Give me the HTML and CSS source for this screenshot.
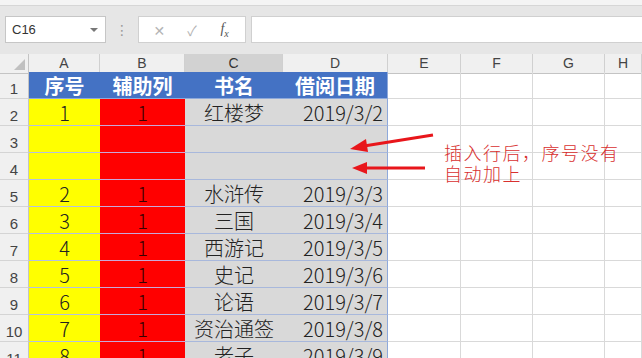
FILE: index.html
```html
<!DOCTYPE html>
<html lang="zh">
<head>
  <meta charset="UTF-8">
  <title>插入行后序号</title>
  <link rel="stylesheet" href="styles.css">
</head>
<body>

  <div class="ribbon-edge"></div>

  <div class="formula-bar">
    <div class="name-box">C16<span class="caret"></span></div>
    <div class="grip">⋮</div>
    <div class="fx-buttons">
      <span class="btn">✕</span>
      <span class="btn">✓</span>
      <span class="btn fx"><i>f</i><sub><i>x</i></sub></span>
    </div>
    <div class="formula-input"></div>
  </div>

  <div class="sheet">
    <div class="row col-head">
      <div class="corner"><span class="tri"></span></div>
      <div class="ch">A</div>
      <div class="ch">B</div>
      <div class="ch sel">C</div>
      <div class="ch">D</div>
      <div class="ch">E</div>
      <div class="ch">F</div>
      <div class="ch">G</div>
      <div class="ch">H</div>
    </div>

    <div class="row">
      <div class="rh">1</div>
      <div class="cell head">序号</div>
      <div class="cell head">辅助列</div>
      <div class="cell head">书名</div>
      <div class="cell head last">借阅日期</div>
      <div class="cell"></div><div class="cell"></div><div class="cell"></div><div class="cell"></div>
    </div>

    <div class="row">
      <div class="rh">2</div>
      <div class="cell yel">1</div>
      <div class="cell red">1</div>
      <div class="cell gray">红楼梦</div>
      <div class="cell gray date">2019/3/2</div>
      <div class="cell"></div><div class="cell"></div><div class="cell"></div><div class="cell"></div>
    </div>

    <div class="row">
      <div class="rh">3</div>
      <div class="cell yel"></div>
      <div class="cell red"></div>
      <div class="cell gray"></div>
      <div class="cell gray date"></div>
      <div class="cell"></div><div class="cell"></div><div class="cell"></div><div class="cell"></div>
    </div>

    <div class="row">
      <div class="rh">4</div>
      <div class="cell yel"></div>
      <div class="cell red"></div>
      <div class="cell gray"></div>
      <div class="cell gray date"></div>
      <div class="cell"></div><div class="cell"></div><div class="cell"></div><div class="cell"></div>
    </div>

    <div class="row">
      <div class="rh">5</div>
      <div class="cell yel">2</div>
      <div class="cell red">1</div>
      <div class="cell gray">水浒传</div>
      <div class="cell gray date">2019/3/3</div>
      <div class="cell"></div><div class="cell"></div><div class="cell"></div><div class="cell"></div>
    </div>

    <div class="row">
      <div class="rh">6</div>
      <div class="cell yel">3</div>
      <div class="cell red">1</div>
      <div class="cell gray">三国</div>
      <div class="cell gray date">2019/3/4</div>
      <div class="cell"></div><div class="cell"></div><div class="cell"></div><div class="cell"></div>
    </div>

    <div class="row">
      <div class="rh">7</div>
      <div class="cell yel">4</div>
      <div class="cell red">1</div>
      <div class="cell gray">西游记</div>
      <div class="cell gray date">2019/3/5</div>
      <div class="cell"></div><div class="cell"></div><div class="cell"></div><div class="cell"></div>
    </div>

    <div class="row">
      <div class="rh">8</div>
      <div class="cell yel">5</div>
      <div class="cell red">1</div>
      <div class="cell gray">史记</div>
      <div class="cell gray date">2019/3/6</div>
      <div class="cell"></div><div class="cell"></div><div class="cell"></div><div class="cell"></div>
    </div>

    <div class="row">
      <div class="rh">9</div>
      <div class="cell yel">6</div>
      <div class="cell red">1</div>
      <div class="cell gray">论语</div>
      <div class="cell gray date">2019/3/7</div>
      <div class="cell"></div><div class="cell"></div><div class="cell"></div><div class="cell"></div>
    </div>

    <div class="row">
      <div class="rh">10</div>
      <div class="cell yel">7</div>
      <div class="cell red">1</div>
      <div class="cell gray">资治通签</div>
      <div class="cell gray date">2019/3/8</div>
      <div class="cell"></div><div class="cell"></div><div class="cell"></div><div class="cell"></div>
    </div>

    <div class="row">
      <div class="rh">11</div>
      <div class="cell yel">8</div>
      <div class="cell red">1</div>
      <div class="cell gray">老子</div>
      <div class="cell gray date">2019/3/9</div>
      <div class="cell"></div><div class="cell"></div><div class="cell"></div><div class="cell"></div>
    </div>
  </div>

  <!-- 标注：箭头和说明文字 -->
  <svg class="arrows" width="642" height="358" viewBox="0 0 642 358">
    <line x1="433" y1="135" x2="364" y2="146" stroke="#e8161b" stroke-width="3"/>
    <polygon points="350,149 366,139 368,152" fill="#e8161b"/>
    <line x1="425" y1="168" x2="366" y2="168" stroke="#e8161b" stroke-width="3"/>
    <polygon points="352,168 367,162 367,174" fill="#e8161b"/>
  </svg>

  <div class="note">插入行后，序号没有<br>自动加上</div>

</body>
</html>
```

FILE: styles.css
```css
body {
  margin: 0;
  width: 642px;
  height: 358px;
  overflow: hidden;
  position: relative;
  background-color: #ffffff;
  font-family: "Noto Sans CJK SC", "DejaVu Sans", sans-serif;
}

.ribbon-edge {
  height: 5px;
  background-color: #f4f4f4;
  border-bottom: 1px solid #d6d6d6;
}

.formula-bar {
  height: 48px;
  background-color: #e6e6e6;
  display: flex;
  align-items: flex-start;
  padding-top: 10px;
  box-sizing: border-box;
}

.name-box {
  margin-left: 5px;
  width: 101px;
  height: 27px;
  box-sizing: border-box;
  background-color: #ffffff;
  border: 1px solid #c6c6c6;
  font-family: "Liberation Sans", sans-serif;
  font-size: 13px;
  color: #333;
  padding-left: 6px;
  line-height: 25px;
  position: relative;
}

.caret {
  position: absolute;
  right: 7px;
  top: 11px;
  border-left: 4px solid transparent;
  border-right: 4px solid transparent;
  border-top: 4px solid #777;
}

.grip {
  width: 32px;
  text-align: center;
  color: #9a9a9a;
  font-size: 14px;
  line-height: 27px;
}

.fx-buttons {
  width: 108px;
  height: 27px;
  box-sizing: border-box;
  background-color: #ffffff;
  border: 1px solid #d0d0d0;
  display: flex;
  align-items: center;
  justify-content: space-around;
  padding: 0 4px;
  color: #b4b4b4;
  font-size: 14px;
}

.btn {
  width: 30px;
  text-align: center;
}

.fx {
  color: #555;
  font-family: "Liberation Serif", serif;
  font-size: 14px;
}

.fx sub {
  font-size: 10px;
}

.formula-input {
  flex: 1;
  margin-left: 5px;
  height: 27px;
  box-sizing: border-box;
  background-color: #ffffff;
  border: 1px solid #d0d0d0;
  border-right: none;
}

.row {
  display: grid;
  grid-template-columns: 29px 71px 85px 98px 105px 73px 72px 72px 1fr;
  height: 27px;
}

.col-head {
  height: 18px;
  background-color: #ffffff;
}

.corner {
  background-color: #f0f0f0;
  border-right: 1px solid #c4c4c4;
  border-bottom: 1px solid #c4c4c4;
  position: relative;
}

.tri {
  position: absolute;
  right: 3px;
  bottom: 3px;
  border-left: 11px solid transparent;
  border-bottom: 11px solid #c0c0c0;
}

.ch {
  background-color: #f0f0f0;
  border-right: 1px solid #d0d0d0;
  border-bottom: 1px solid #c4c4c4;
  text-align: center;
  font-family: "Liberation Sans", sans-serif;
  font-size: 14px;
  line-height: 18px;
  color: #444;
  box-sizing: border-box;
}

.ch.sel {
  background-color: #d2d2d2;
  border-bottom: 2px solid #217346;
  color: #333;
}

.rh {
  background-color: #f0f0f0;
  border-right: 1px solid #c4c4c4;
  border-bottom: 1px solid #d4d4d4;
  box-sizing: border-box;
  font-family: "Liberation Sans", sans-serif;
  font-size: 15px;
  color: #444;
  text-align: center;
  display: flex;
  align-items: flex-end;
  justify-content: center;
  padding-bottom: 1px;
}

.cell {
  box-sizing: border-box;
  border-right: 1px solid #d9d9d9;
  border-bottom: 1px solid #d9d9d9;
  font-size: 20px;
  font-weight: 300;
  color: #222;
  display: flex;
  align-items: flex-end;
  justify-content: center;
  line-height: 25px;
  white-space: nowrap;
}

.head {
  background-color: #4472c4;
  color: #ffffff;
  font-weight: bold;
  border-right: none;
  border-bottom: 1px solid #8ea9db;
}

.yel {
  background-color: #ffff00;
  border-right: none;
  border-bottom: 1px solid #b4c0e0;
}

.red {
  background-color: #ff0000;
  color: #3a0000;
  border-right: none;
  border-bottom: 1px solid #c8a8d8;
}

.gray {
  background-color: #d9d9d9;
  border-right: none;
  border-bottom: 1px solid #a8b8dc;
}

.date {
  justify-content: flex-end;
  padding-right: 4px;
}

.last,
.gray.date {
  border-right: 1px solid #8ea9db;
}

.arrows {
  position: absolute;
  top: 0;
  left: 0;
}

.note {
  position: absolute;
  left: 444px;
  top: 142px;
  color: #d8302f;
  font-size: 18px;
  font-weight: 300;
  letter-spacing: 1.5px;
  line-height: 21px;
}
```
